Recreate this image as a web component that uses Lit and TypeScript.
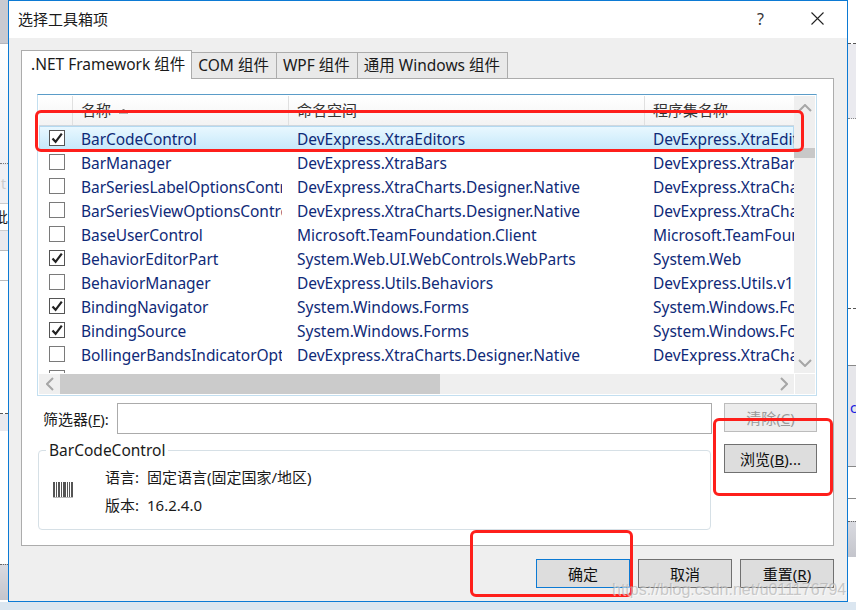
import { LitElement, html, css, svg } from "lit";
import { customElement } from "lit/decorators.js";

const rows: [boolean, string, string, string][] = [
  [true, "BarCodeControl", "DevExpress.XtraEditors", "DevExpress.XtraEditors"],
  [false, "BarManager", "DevExpress.XtraBars", "DevExpress.XtraBars"],
  [false, "BarSeriesLabelOptionsControl", "DevExpress.XtraCharts.Designer.Native", "DevExpress.XtraCharts"],
  [false, "BarSeriesViewOptionsControl", "DevExpress.XtraCharts.Designer.Native", "DevExpress.XtraCharts"],
  [false, "BaseUserControl", "Microsoft.TeamFoundation.Client", "Microsoft.TeamFoundation"],
  [true, "BehaviorEditorPart", "System.Web.UI.WebControls.WebParts", "System.Web"],
  [false, "BehaviorManager", "DevExpress.Utils.Behaviors", "DevExpress.Utils.v16.2"],
  [true, "BindingNavigator", "System.Windows.Forms", "System.Windows.Forms"],
  [true, "BindingSource", "System.Windows.Forms", "System.Windows.Forms"],
  [false, "BollingerBandsIndicatorOptions", "DevExpress.XtraCharts.Designer.Native", "DevExpress.XtraCharts"],
  [false, "", "", ""],
];

const check = svg`<svg class="tick" width="14" height="14" viewBox="0 0 14 14"><path d="M2.5 7.5 5.6 10.8 11.8 2.6" fill="none" stroke="#222" stroke-width="2.2"/></svg>`;

const barcodeBars: [number, number][] = [
  [0, 2], [3, 1], [5, 2], [8, 1], [10, 3], [14, 1], [16, 1], [18, 2],
];

@customElement("app-root")
export class AppRoot extends LitElement {
  static styles = css`
    :host {
      display: block;
      width: 856px;
      height: 610px;
      overflow: hidden;
      position: relative;
      font-family: "Noto Sans", "Noto Sans CJK SC", sans-serif;
      font-size: 15.5px;
      color: #1a1a1a;
    }
    .desktop {
      display: grid;
      grid-template-columns: 8px 840px 8px;
      grid-template-rows: 602px 8px;
      background: #fff;
    }
    .strip { display: flex; flex-direction: column; overflow: hidden; height: 602px; }
    .seg { flex: none; overflow: hidden; }
    .cap { height: 44px; background: #c9cad1; border-bottom: 1px solid #b5b6bd; box-sizing: border-box; }
    .l1 { height: 119px; background: linear-gradient(#fff, #f0f0f5); }
    .dots { height: 2px; border-top: 1px dotted #777; box-sizing: border-box; background: #e8e8ee; }
    .l2 { height: 39px; background: #f0f0f4; border-bottom: 1px solid #ccc; box-sizing: border-box; color: #ccc; font-size: 14px; line-height: 38px; text-indent: 1px; }
    .l3 { height: 27px; background: #fff; border-bottom: 1px solid #ccc; box-sizing: border-box; line-height: 26px; font-size: 14px; text-indent: -6px; color: #222; }
    .l4 { height: 20px; background: #e9e9ee; border-bottom: 1px solid #bbb; box-sizing: border-box; }
    .l5 { height: 30px; background: #fff; border-bottom: 1px solid #bbb; box-sizing: border-box; }
    .l6 { height: 133px; background: #fff; border-bottom: 1px dashed #555; box-sizing: border-box; }
    .l7 { height: 17px; background: #e9e9ee; }
    .l8 { height: 133px; background: #fff; }
    .foot { height: 36px; background: linear-gradient(#d9dae0, #c4c5cc); border-top: 1px dotted #666; box-sizing: border-box; }
    .r1 { height: 44px; background: #fff; border-bottom: 1px dashed #555; box-sizing: border-box; }
    .r2 { height: 75px; background: #eaeaef; border-bottom: 1px dotted #888; box-sizing: border-box; }
    .r3 { height: 190px; background: #fff; border-bottom: 1px dashed #555; box-sizing: border-box; }
    .r4 { height: 57px; background: #fff; border-bottom: 1px solid #888; box-sizing: border-box; }
    .r5 { height: 101px; background: #e6e6ea; border-bottom: 1px solid #888; box-sizing: border-box; color: #1a1ae0; font-size: 14px; line-height: 84px; text-indent: 2px; }
    .r6 { height: 32px; background: #fff; border-bottom: 1px solid #888; box-sizing: border-box; }
    .r7 { height: 22px; background: #fff; }
    .bottom { grid-column: 1 / 4; background: #dbe6f0; }

    .dialog {
      box-sizing: border-box;
      border: 1px solid #0c7ad4;
      background: #efefef;
      display: flex;
      flex-direction: column;
      height: 602px;
    }
    .title {
      box-sizing: border-box;
      height: 37px;
      flex: none;
      background: #fff;
      display: flex;
      align-items: center;
      padding: 0 23px 2px 9px;
      font-size: 15px;
    }
    .title .name { flex: 1; }
    .help { font-size: 16px; margin-right: 47px; color: #333; }
    .body { padding: 12px 13px 0 12px; flex: 1; display: flex; flex-direction: column; }
    .tabs { display: flex; align-items: flex-end; height: 28px; position: relative; z-index: 1; }
    .tab {
      box-sizing: border-box;
      height: 26px;
      background: #e9e9e9;
      border: 1px solid #acacac;
      border-left-width: 0;
      border-bottom: none;
      padding: 0 7px 0 6px;
      line-height: 25px;
      white-space: nowrap;
    }
    .tab.on {
      height: 29px;
      margin-bottom: -1px;
      background: #fff;
      border-left-width: 1px;
      line-height: 27px;
      padding: 0 6px 0 9px;
    }
    .panel {
      box-sizing: border-box;
      height: 468px;
      background: #fff;
      border: 1px solid #acacac;
      padding: 15px 15px 0;
    }
    .list {
      box-sizing: border-box;
      width: 780px;
      height: 302px;
      border: 1px solid #c3dff0;
      border-top-color: #5b9cc8;
      padding: 1px;
      display: grid;
      grid-template-columns: 755px 21px;
      grid-template-rows: 277px 21px;
    }
    .main { overflow: hidden; }
    .row, .head {
      display: grid;
      grid-template-columns: 34px 216px 356px 149px;
    }
    .head {
      height: 30px;
      box-sizing: border-box;
      background: linear-gradient(#fff, #f3f3f3);
      border-bottom: 1px solid #d0d7de;
      color: #333;
      font-size: 15px;
    }
    .head > div {
      border-right: 1px solid #e0e0e0;
      padding-left: 8px;
      line-height: 29px;
      overflow: hidden;
      box-sizing: border-box;
      white-space: nowrap;
      display: flex;
      align-items: center;
    }
    .head > div:last-child { border-right: none; }
    .sort { margin-left: 8px; flex: none; }
    .row { height: 24px; color: #0f2a78; }
    .row.sel {
      background: linear-gradient(#eaf8ff, #c5e8fa);
      box-shadow: inset 0 0 0 1px #b4d9f0;
    }
    .cell { height: 24px; padding-left: 8px; overflow: hidden; white-space: nowrap; line-height: 26px; }
    .cell.first { margin-right: 7px; letter-spacing: -0.06px; }
    .cb { display: flex; justify-content: center; align-items: center; padding-left: 1px; }
    .box {
      box-sizing: border-box;
      width: 16px;
      height: 16px;
      border: 1px solid #7a7a7a;
      background: #fff;
      display: flex;
      align-items: center;
      justify-content: center;
    }
    .box.on { border-color: #555; }
    .vbar {
      background: #efefef;
      display: flex;
      flex-direction: column;
      align-items: center;
    }
    .vbar .thumb { width: 100%; height: 10px; background: #c8c8c8; margin-top: 28px; flex: none; }
    .vbar .sp { flex: 1; }
    .vbar .arrow { height: 21px; display: flex; align-items: center; justify-content: center; flex: none; }
    .vbar .arrow.up { height: 24px; }
    .hbar { background: #efefef; display: flex; border-top: 1px solid #fff; box-sizing: border-box; }
    .hbar .arrow { width: 21px; display: flex; align-items: center; justify-content: center; }
    .hbar .thumb { width: 380px; background: #cbcbcb; }
    .hbar .sp { flex: 1; }
    .corner { background: #efefef; border-left: 1px solid #fff; border-top: 1px solid #fff; box-sizing: border-box; }
    .lower {
      display: grid;
      grid-template-columns: 80px 595px 93px;
      margin-top: 7px;
      width: 780px;
      grid-template-rows: 31px auto;
      row-gap: 10px;
    }
    .label { padding-left: 6px; line-height: 33px; white-space: nowrap; font-size: 15px; }
    .input { box-sizing: border-box; border: 1px solid #ababab; background: #fff; height: 31px; }
    .btn {
      box-sizing: border-box;
      width: 94px;
      height: 29px;
      background: #ddd;
      border: 1px solid #707070;
      display: flex;
      align-items: center;
      justify-content: center;
      white-space: nowrap;
      color: #111;
      font-size: 15px;
    }
    .clear { margin-left: 12px; width: 93px; background: #ececec; border-color: #bcbcbc; color: #9a9a9a; }
    .browse { margin-left: 12px; width: 93px; }
    .primary { border-color: #0c7ad4; }
    .group {
      grid-column: 1 / 3;
      margin: -3px 1px 0 1px;
      box-sizing: border-box;
      height: 89px;
      border: 1px solid #d6e0e6;
      border-radius: 4px;
      padding: 0;
      min-width: 0;
    }
    .group legend { margin-left: 7px; padding: 0 3px; line-height: 18px; }
    .info { display: flex; align-items: center; padding-left: 14px; height: 64px; }
    .lines { margin-left: 32px; display: flex; flex-direction: column; gap: 6px; line-height: 22px; font-size: 15px; }
    .lines span.k { margin-right: 8px; }
    .buttons { display: flex; justify-content: flex-end; gap: 8px; margin-top: 13px; }
    .mark {
      position: absolute;
      box-sizing: border-box;
      border: 3px solid #fe1f1b;
      border-radius: 6px;
      pointer-events: none;
    }
    .m1 { left: 35px; top: 110px; width: 769px; height: 42px; }
    .m2 { left: 713px; top: 418px; width: 120px; height: 78px; }
    .m3 { left: 470px; top: 530px; width: 163px; height: 67px; }
    .wm {
      position: absolute;
      left: 612px;
      top: 581px;
      font-family: "Liberation Sans", sans-serif;
      font-size: 16px;
      color: rgba(170, 170, 170, 0.6);
      text-shadow: 1px 1px 0 rgba(255,255,255,0.5);
      white-space: nowrap;
    }
  `;

  render() {
    return html`
      <div class="desktop">
        <div class="strip">
          <div class="seg cap"></div>
          <div class="seg l1"></div>
          <div class="seg dots"></div>
          <div class="seg l2">t</div>
          <div class="seg l3">批</div>
          <div class="seg l4"></div>
          <div class="seg l5"></div>
          <div class="seg l6"></div>
          <div class="seg l7"></div>
          <div class="seg l8"></div>
          <div class="seg foot"></div>
        </div>
        <div class="dialog">
          <div class="title">
            <span class="name">选择工具箱项</span>
            <span class="help">?</span>
            <svg width="13" height="13" viewBox="0 0 13 13"><path d="M.5.5 12.5 12.5M12.5.5 .5 12.5" stroke="#222" stroke-width="1.1" fill="none"/></svg>
          </div>
          <div class="body">
            <div class="tabs">
              <div class="tab on">.NET Framework 组件</div>
              <div class="tab">COM 组件</div>
              <div class="tab">WPF 组件</div>
              <div class="tab">通用 Windows 组件</div>
            </div>
            <div class="panel">
              <div class="list">
                <div class="main">
                  <div class="head">
                    <div></div>
                    <div>名称<svg class="sort" width="9" height="6" viewBox="0 0 9 6"><path d="M.5 5.5 4.5 1 8.5 5.5" fill="#777" stroke="#777"/></svg></div>
                    <div>命名空间</div>
                    <div>程序集名称</div>
                  </div>
                  ${rows.map(
                    ([on, a, b, c], i) => html`
                      <div class="row ${i === 0 ? "sel" : ""}">
                        <div class="cb">
                          <div class="box ${on ? "on" : ""}">${on ? check : ""}</div>
                        </div>
                        <div class="cell first">${a}</div>
                        <div class="cell">${b}</div>
                        <div class="cell">${c}</div>
                      </div>
                    `
                  )}
                </div>
                <div class="vbar">
                  <div class="arrow up">
                    <svg width="14" height="8" viewBox="0 0 14 8"><path d="M1 7 7 1 13 7" fill="none" stroke="#a6a6a6" stroke-width="2"/></svg>
                  </div>
                  <div class="thumb"></div>
                  <div class="sp"></div>
                  <div class="arrow">
                    <svg width="14" height="8" viewBox="0 0 14 8"><path d="M1 1 7 7 13 1" fill="none" stroke="#a6a6a6" stroke-width="2"/></svg>
                  </div>
                </div>
                <div class="hbar">
                  <div class="arrow">
                    <svg width="8" height="14" viewBox="0 0 8 14"><path d="M7 1 1 7 7 13" fill="none" stroke="#a6a6a6" stroke-width="2"/></svg>
                  </div>
                  <div class="thumb"></div>
                  <div class="sp"></div>
                  <div class="arrow">
                    <svg width="8" height="14" viewBox="0 0 8 14"><path d="M1 1 7 7 1 13" fill="none" stroke="#a6a6a6" stroke-width="2"/></svg>
                  </div>
                </div>
                <div class="corner"></div>
              </div>
              <div class="lower">
                <div class="label">筛选器(<u>F</u>):</div>
                <div class="input"></div>
                <div class="btn clear">清除(<u>C</u>)</div>
                <fieldset class="group">
                  <legend>BarCodeControl</legend>
                  <div class="info">
                    <svg width="20" height="18" viewBox="0 0 20 18">
                      ${barcodeBars.map(([x, w]) => svg`<rect x=${x} y="0" width=${w} height="15" fill="#555"/>`)}
                      <rect x="0" y="15" width="20" height="1" fill="#bbb"/>
                    </svg>
                    <div class="lines">
                      <div><span class="k">语言:</span>固定语言(固定国家/地区)</div>
                      <div><span class="k">版本:</span>16.2.4.0</div>
                    </div>
                  </div>
                </fieldset>
                <div class="btn browse">浏览(<u>B</u>)...</div>
              </div>
            </div>
            <div class="buttons">
              <div class="btn primary">确定</div>
              <div class="btn">取消</div>
              <div class="btn">重置(<u>R</u>)</div>
            </div>
          </div>
        </div>
        <div class="strip">
          <div class="seg r1"></div>
          <div class="seg r2"></div>
          <div class="seg r3"></div>
          <div class="seg r4"></div>
          <div class="seg r5">c</div>
          <div class="seg r6"></div>
          <div class="seg r7"></div>
          <div class="seg foot"></div>
        </div>
        <div class="bottom"></div>
      </div>
      <div class="mark m1"></div>
      <div class="mark m2"></div>
      <div class="mark m3"></div>
      <div class="wm">https://blog.csdn.net/u011176794</div>
    `;
  }
}
